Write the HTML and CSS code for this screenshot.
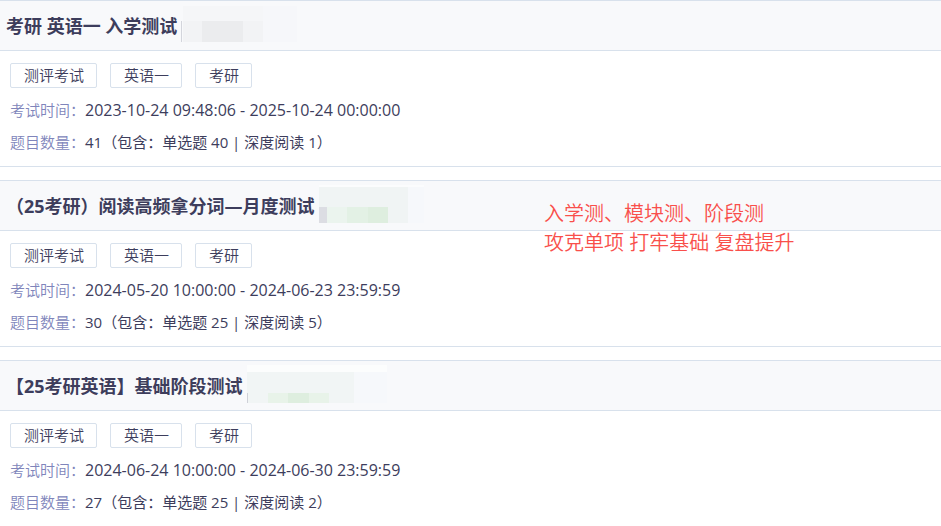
FILE: index.html
```html
<!DOCTYPE html>
<html lang="zh-CN">

<head>
  <meta charset="utf-8">
  <title>测评考试</title>
  <meta name="viewport" content="width=device-width, initial-scale=1">
  <link rel="stylesheet" href="styles.css">
</head>

<body>
  <main>
    <section class="exam">
      <header>
        <h2>考研 英语一 入学测试</h2>
        <svg class="mask" width="116" height="36" aria-hidden="true">
          <rect x="2" width="114" height="36" fill="#f5f6f8" />
          <rect x="82" width="34" height="36" fill="#f6f7fa" />
          <rect x="2" y="15" width="80" height="21" fill="#f2f3f5" />
          <rect x="21" y="15" width="41" height="21" fill="#ebecee" />
          <rect y="15" width="1" height="21" fill="#d3d5dc" />
        </svg>
      </header>
      <div class="exam-body">
        <div class="tags"><span>测评考试</span><span>英语一</span><span>考研</span></div>
        <dl>
          <div><dt>考试时间：</dt><dd class="period">2023-10-24 09:48:06 - 2025-10-24 00:00:00</dd></div>
          <div><dt>题目数量：</dt><dd>41（包含：单选题 40 | 深度阅读 1）</dd></div>
        </dl>
      </div>
    </section>

    <section class="exam">
      <header>
        <h2>（25考研）阅读高频拿分词—月度测试</h2>
        <svg class="mask" width="105" height="38" aria-hidden="true">
          <rect width="105" height="2" fill="#fbfcfd" />
          <rect y="2" width="89" height="36" fill="#f0f4f4" />
          <rect x="89" y="2" width="16" height="36" fill="#f6f8fb" />
          <rect y="22" width="8" height="16" fill="#dcdde3" />
          <rect x="8" y="22" width="20" height="16" fill="#ebf4ee" />
          <rect x="28" y="22" width="21" height="16" fill="#e3f1e5" />
          <rect x="49" y="22" width="20" height="16" fill="#deeedf" />
        </svg>
      </header>
      <div class="exam-body">
        <div class="tags"><span>测评考试</span><span>英语一</span><span>考研</span></div>
        <dl>
          <div><dt>考试时间：</dt><dd class="period">2024-05-20 10:00:00 - 2024-06-23 23:59:59</dd></div>
          <div><dt>题目数量：</dt><dd>30（包含：单选题 25 | 深度阅读 5）</dd></div>
        </dl>
      </div>
      <p class="note">入学测、模块测、阶段测<br>攻克单项 打牢基础 复盘提升</p>
    </section>

    <section class="exam">
      <header>
        <h2>【25考研英语】基础阶段测试</h2>
        <svg class="mask" width="140" height="38" aria-hidden="true">
          <rect width="140" height="7" fill="#fcfdfd" />
          <rect y="7" width="107" height="31" fill="#f1f5f5" />
          <rect x="107" y="7" width="33" height="31" fill="#f6f8fb" />
          <rect x="21" y="28" width="61" height="10" fill="#e8f3e9" />
          <rect x="41" y="28" width="21" height="10" fill="#deeedf" />
          <rect y="28" width="1" height="10" fill="#cfd1d8" />
        </svg>
      </header>
      <div class="exam-body">
        <div class="tags"><span>测评考试</span><span>英语一</span><span>考研</span></div>
        <dl>
          <div><dt>考试时间：</dt><dd class="period">2024-06-24 10:00:00 - 2024-06-30 23:59:59</dd></div>
          <div><dt>题目数量：</dt><dd>27（包含：单选题 25 | 深度阅读 2）</dd></div>
        </dl>
      </div>
    </section>
  </main>
</body>

</html>
```
FILE: styles.css
```css
body {
  margin: 0;
  background: white;
  color: #3d3d5c;
  font-family: "Open Sans", "Noto Sans CJK SC", sans-serif;
  font-size: 15px;
  font-weight: 350;
  overflow-x: hidden;
}

main {
  display: flex;
  flex-direction: column;
  gap: 13px;
}

.exam {
  position: relative;
  border-bottom: 1px solid #d8e1ec;

  & header {
    display: flex;
    align-items: center;
    gap: 4px;
    height: 49px;
    padding-left: 6px;
    background: #f8f9fb;
    border-top: 1px solid #d8e1ec;
    border-bottom: 1px solid #d8e1ec;
  }

  &:last-child {
    border-bottom: 0;
  }
}

h2 {
  margin: 0;
  font-size: 18px;
  line-height: 24px;
  white-space: nowrap;
}

.mask {
  flex: none;
  margin-bottom: 3px;
}

.exam-body {
  padding: 12px 10px 8px;
}

.tags {
  display: flex;
  gap: 13px;
  margin-bottom: 6px;

  & span {
    padding: 0 12px 0 13px;
    line-height: 23px;
    border: 1px solid #d8e1ec;
    border-radius: 2px;
  }
}

dl {
  margin: 0;
  line-height: 32px;

  & div {
    display: flex;
  }
}

dt {
  color: #8085bb;
}

dd {
  margin: 0;
  font-weight: 400;
}

.period {
  font-size: 16px;
}

/* sits over the header and body of its card */
.note {
  position: absolute;
  top: 19px;
  left: 544px;
  margin: 0;
  color: #f94f4b;
  font-size: 20px;
  line-height: 29px;
}
```
